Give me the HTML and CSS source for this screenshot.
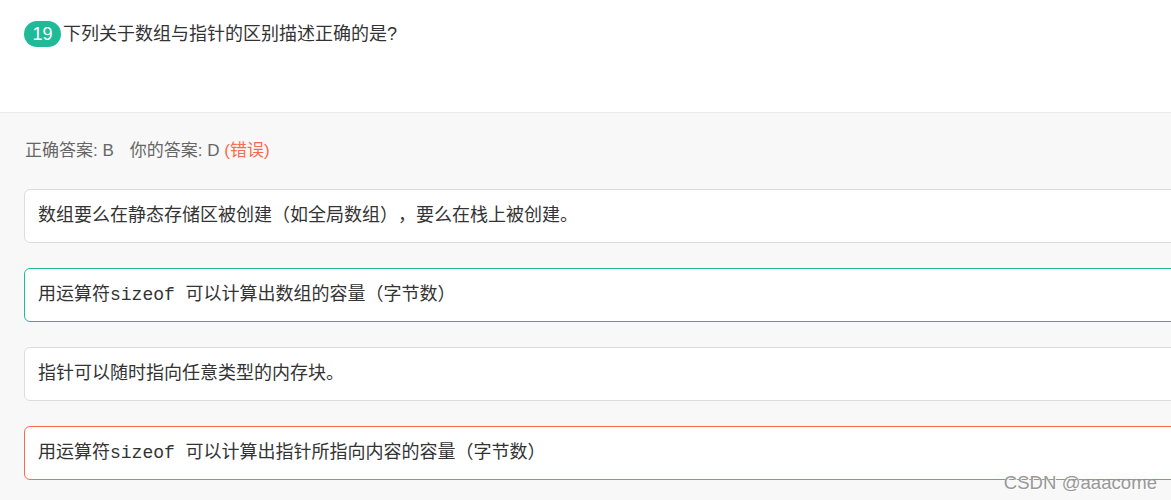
FILE: index.html
```html
<!DOCTYPE html>
<html lang="zh-CN">
<head>
<meta charset="utf-8">
<title>Quiz</title>
<link rel="stylesheet" href="styles.css">
</head>
<body>
<div class="page">
  <section class="question">
    <span class="badge">19</span>
    <span class="q-text">下列关于数组与指针的区别描述正确的是?</span>
  </section>
  <section class="answers">
    <div class="result">
      <span>正确答案: B</span>
      <span class="yours">你的答案: D <span class="wrong">(错误)</span></span>
    </div>
    <ul class="options">
      <li class="option">数组要么在静态存储区被创建（如全局数组），要么在栈上被创建。</li>
      <li class="option correct">用运算符sizeof 可以计算出数组的容量（字节数）</li>
      <li class="option">指针可以随时指向任意类型的内存块。</li>
      <li class="option incorrect">用运算符sizeof 可以计算出指针所指向内容的容量（字节数）</li>
    </ul>
  </section>
  <div class="watermark">CSDN @aaacome</div>
</div>
</body>
</html>
```
FILE: styles.css
```css
html, body {
  margin: 0;
  padding: 0;
  overflow: hidden;
}
body {
  font-family: "Liberation Sans", "Noto Sans CJK SC", sans-serif;
  background: #f8f8f8;
  width: 1171px;
  height: 500px;
  text-spacing-trim: space-all;
}
.page {
  position: relative;
  height: 500px;
}
.question {
  background: #fff;
  height: 91px;
  padding: 21px 24px 0 24px;
  border-bottom: 1px solid #ebebeb;
  display: flex;
  align-items: flex-start;
}
.badge {
  display: inline-flex;
  align-items: center;
  justify-content: center;
  width: 37px;
  height: 26px;
  border-radius: 13px;
  background: #1fbb99;
  color: #fff;
  font-size: 18px;
  line-height: 26px;
  margin-right: 2px;
}
.q-text {
  font-family: "Liberation Sans", "Noto Sans CJK SC", sans-serif;
  font-size: 18px;
  line-height: 26px;
  color: #333;
}
.answers {
  padding: 26px 0 0 24px;
}
.result {
  font-family: "Liberation Sans", "Noto Sans CJK SC", sans-serif;
  font-size: 17px;
  line-height: 24px;
  color: #666;
  display: flex;
  gap: 16px;
  margin-left: 1px;
}
.wrong {
  color: #f96a4f;
}
.options {
  list-style: none;
  margin: 26px 0 0 0;
  padding: 0;
  width: 1200px;
  display: flex;
  flex-direction: column;
  gap: 25px;
}
.option {
  background: #fff;
  border: 1px solid #dcdcdc;
  border-radius: 6px;
  height: 52px;
  line-height: 52px;
  padding-left: 13px;
  font-family: "Liberation Mono", "Noto Sans CJK SC", monospace;
  font-size: 18px;
  color: #333;
  white-space: nowrap;
}
.option.correct {
  border-color: #1fbb99;
}
.option.incorrect {
  border-color: #fa6a4c;
}
.watermark {
  position: absolute;
  right: 14px;
  bottom: 6px;
  font-family: "Liberation Sans", sans-serif;
  font-size: 18.6px;
  color: #999;
  text-shadow: 1px 1px 0 #fff;
}
```
